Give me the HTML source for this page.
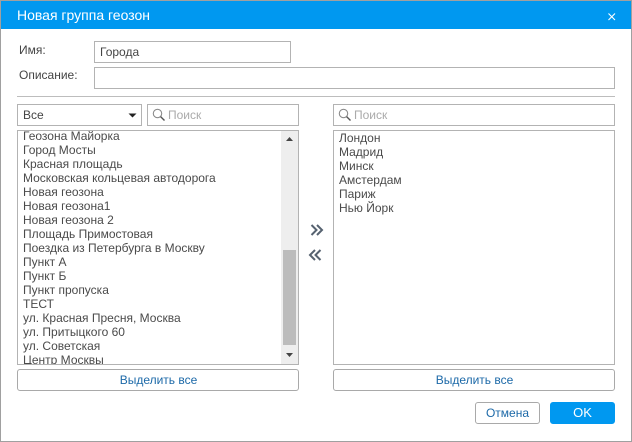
<!DOCTYPE html>
<html><head><meta charset="utf-8">
<style>
html,body{margin:0;padding:0;background:#fff}
#w{position:relative;width:632px;height:442px;overflow:hidden;background:#fff;font:12px/14px "Liberation Sans",Arial,sans-serif;color:#444}
#w div,#w span.a{position:absolute;box-sizing:border-box}
.b{border:1px solid #b3b3b3;background:#fff}
.t{white-space:nowrap}
.btn{border:1px solid #a9a9a9;border-radius:3px;text-align:center;color:#1c69a8;line-height:20px;background:#fff}
.ph{color:#aaa}
.list{overflow:hidden}
.list p{margin:0;padding:0 0 0 5px;height:14px;line-height:14px;white-space:nowrap;color:#4a4a4a}
svg{position:absolute;display:block}
</style></head>
<body>
<div id="w">
<div style="left:0;top:0;width:632px;height:442px;border:1px solid #a0a0a0"></div>
<div style="left:1px;top:1px;width:630px;height:28px;background:#0098f0"></div>
<div class="t" style="left:17px;top:7px;color:#fff;font-size:14px;line-height:16px">Новая группа геозон</div>
<svg style="left:607px;top:12px" width="10" height="10" viewBox="0 0 10 10"><path d="M1.5 1.5L8 8M8 1.5L1.5 8" stroke="#fff" stroke-width="1.1" fill="none"/></svg>

<div class="t" style="left:19px;top:43px;color:#444">Имя:</div>
<div class="b" style="left:94px;top:41px;width:197px;height:22px"></div>
<div class="t" style="left:100px;top:45px;color:#444">Города</div>
<div class="t" style="left:19px;top:68px;color:#444">Описание:</div>
<div class="b" style="left:94px;top:67px;width:521px;height:22px"></div>
<div style="left:17px;top:96px;width:598px;height:1px;background:#bdbdbd"></div>

<div class="b" style="left:17px;top:104px;width:125px;height:22px"></div>
<div class="t" style="left:23px;top:108px;color:#444">Все</div>
<svg style="left:128px;top:113px" width="9" height="5" viewBox="0 0 9 5"><path d="M0.5 0.5H8.5L4.5 4.5Z" fill="#222"/></svg>

<div class="b" style="left:147px;top:104px;width:152px;height:22px"></div>
<svg style="left:152px;top:108px" width="14" height="14" viewBox="0 0 14 14"><circle cx="5.5" cy="5.5" r="4.2" stroke="#8c8c8c" stroke-width="1.1" fill="none"/><path d="M8.6 8.6L12.5 12.5" stroke="#555" stroke-width="1.4" fill="none"/></svg>
<div class="t ph" style="left:168px;top:108px">Поиск</div>

<div class="b" style="left:333px;top:104px;width:282px;height:22px"></div>
<svg style="left:338px;top:108px" width="14" height="14" viewBox="0 0 14 14"><circle cx="5.5" cy="5.5" r="4.2" stroke="#8c8c8c" stroke-width="1.1" fill="none"/><path d="M8.6 8.6L12.5 12.5" stroke="#555" stroke-width="1.4" fill="none"/></svg>
<div class="t ph" style="left:354px;top:108px">Поиск</div>

<div class="b" style="left:17px;top:130px;width:282px;height:235px"></div>
<div class="list" style="left:18px;top:131px;width:263px;height:233px">
<div style="left:0;top:-2px;width:263px">
<p>Геозона Майорка</p><p>Город Мосты</p><p>Красная площадь</p><p>Московская кольцевая автодорога</p><p>Новая геозона</p><p>Новая геозона1</p><p>Новая геозона 2</p><p>Площадь Примостовая</p><p>Поездка из Петербурга в Москву</p><p>Пункт А</p><p>Пункт Б</p><p>Пункт пропуска</p><p>ТЕСТ</p><p>ул. Красная Пресня, Москва</p><p>ул. Притыцкого 60</p><p>ул. Советская</p><p>Центр Москвы</p>
</div></div>
<div style="left:281px;top:131px;width:17px;height:233px;background:#eeeeee"></div>
<div style="left:283px;top:250px;width:13px;height:95px;background:#bcbcbc"></div>
<svg style="left:286px;top:137px" width="7" height="4" viewBox="0 0 7 4"><path d="M0 4H7L3.5 0Z" fill="#444"/></svg>
<svg style="left:286px;top:353px" width="7" height="4" viewBox="0 0 7 4"><path d="M0 0H7L3.5 4Z" fill="#444"/></svg>

<div class="b" style="left:333px;top:130px;width:282px;height:235px"></div>
<div class="list" style="left:334px;top:131px;width:280px;height:233px">
<div style="left:0;top:0;width:280px">
<p>Лондон</p><p>Мадрид</p><p>Минск</p><p>Амстердам</p><p>Париж</p><p>Нью Йорк</p>
</div></div>

<svg style="left:310px;top:223px" width="14" height="14" viewBox="0 0 14 14"><path d="M1.5 2L6.5 7L1.5 12M7 2L12 7L7 12" stroke="#566270" stroke-width="2" fill="none"/></svg>
<svg style="left:308px;top:248px" width="14" height="14" viewBox="0 0 14 14"><path d="M7 2L2 7L7 12M12.5 2L7.5 7L12.5 12" stroke="#566270" stroke-width="2" fill="none"/></svg>

<div class="btn" style="left:17px;top:369px;width:282px;height:22px;padding-left:1px">Выделить все</div>
<div class="btn" style="left:333px;top:369px;width:282px;height:22px;padding-left:1px">Выделить все</div>
<div class="btn" style="left:475px;top:402px;width:65px;height:22px">Отмена</div>
<div class="btn" style="left:550px;top:402px;width:65px;height:22px;background:#0098f0;border-color:#0098f0;color:#fff;font-size:13px">OK</div>
</div>
</body></html>
